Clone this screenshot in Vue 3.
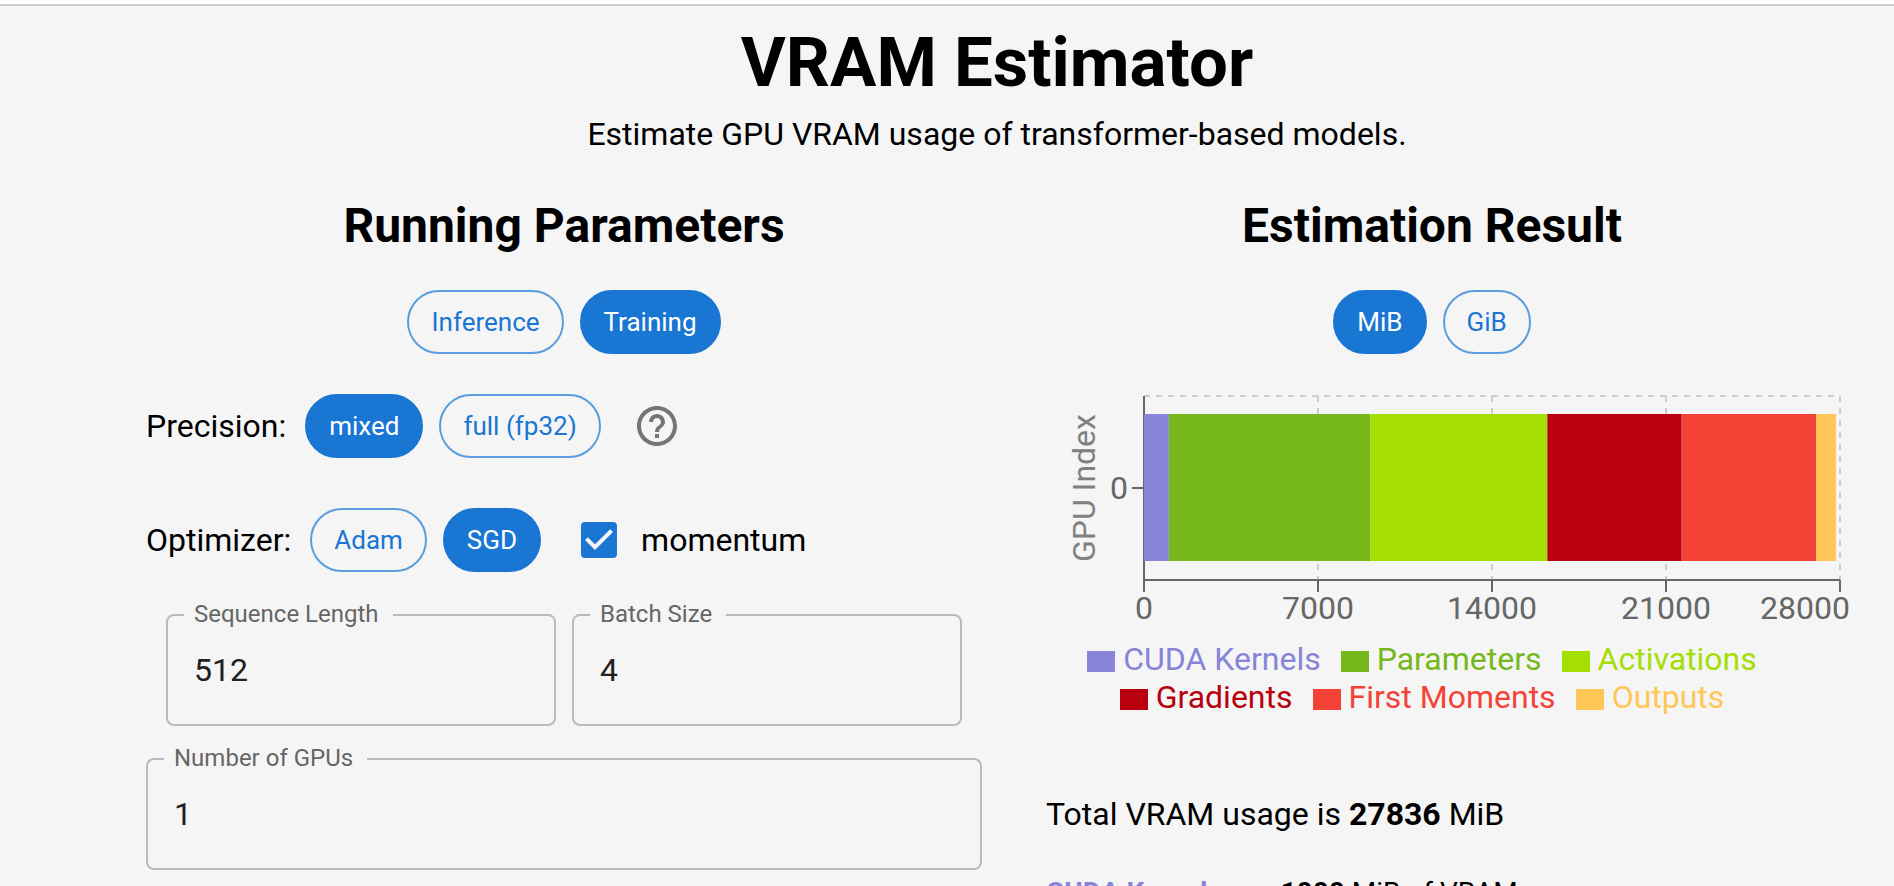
<script setup>
import { computed, ref } from 'vue'

const mode = ref('Training')
const precision = ref('mixed')
const optimizer = ref('SGD')
const unit = ref('MiB')
const momentum = ref(true)
const sequenceLength = ref(512)
const batchSize = ref(4)
const gpuCount = ref(1)

const usage = [
  { name: 'CUDA Kernels', value: 1000, color: '#8884d8' },
  { name: 'Parameters', value: 8107, color: '#76b81b' },
  { name: 'Activations', value: 7120, color: '#a4de02' },
  { name: 'Gradients', value: 5404, color: '#b9000e' },
  { name: 'First Moments', value: 5404, color: '#f44336' },
  { name: 'Outputs', value: 801, color: '#ffc658' },
]
const total = usage.reduce((sum, part) => sum + part.value, 0)

// Plot area inside the chart's own coordinate system
const plot = { left: 128, right: 824, top: 10, bottom: 194, max: 28000 }
const toX = (value) => plot.left + (value / plot.max) * (plot.right - plot.left)
const ticks = [0, 7000, 14000, 21000, 28000]

const bars = computed(() => {
  let start = 0
  return usage.map((part) => {
    const x = toX(start)
    start += part.value
    return { ...part, x, width: toX(start) - x }
  })
})
</script>

<template>
  <div class="top-strip"></div>
  <main class="page">
    <header class="intro">
      <h1>VRAM Estimator</h1>
      <p>Estimate GPU VRAM usage of transformer-based models.</p>
    </header>

    <div class="columns">
      <section class="params">
        <h2>Running Parameters</h2>
        <div class="chips centered">
          <button
            v-for="name in ['Inference', 'Training']"
            :key="name"
            type="button"
            class="chip"
            :class="{ filled: mode === name }"
            :aria-pressed="mode === name"
            @click="mode = name"
          >{{ name }}</button>
        </div>

        <div class="option precision">
          <span class="option-name">Precision:</span>
          <button
            v-for="name in ['mixed', 'full (fp32)']"
            :key="name"
            type="button"
            class="chip"
            :class="{ filled: precision === name }"
            :aria-pressed="precision === name"
            @click="precision = name"
          >{{ name }}</button>
          <button type="button" class="help" aria-label="About precision">
            <svg viewBox="0 0 24 24" aria-hidden="true">
              <path d="M11 18h2v-2h-2v2zm1-16C6.48 2 2 6.48 2 12s4.480 10 10 10 10-4.480 10-10S17.520 2 12 2zm0 18c-4.410 0-8-3.590-8-8s3.590-8 8-8 8 3.590 8 8-3.590 8-8 8zm0-14c-2.210 0-4 1.790-4 4h2c0-1.100.9-2 2-2s2 .9 2 2c0 2-3 1.750-3 5h2c0-2.250 3-2.500 3-5 0-2.210-1.790-4-4-4z" />
            </svg>
          </button>
        </div>

        <div class="option optimizer">
          <span class="option-name">Optimizer:</span>
          <button
            v-for="name in ['Adam', 'SGD']"
            :key="name"
            type="button"
            class="chip"
            :class="{ filled: optimizer === name }"
            :aria-pressed="optimizer === name"
            @click="optimizer = name"
          >{{ name }}</button>
          <label class="check">
            <span class="box">
              <input v-model="momentum" type="checkbox" />
              <svg v-if="momentum" viewBox="3 3 18 18" aria-hidden="true">
                <path d="M10 17l-5-5 1.410-1.410L10 14.170l7.590-7.590L19 8l-9 9z" />
              </svg>
            </span>
            <span>momentum</span>
          </label>
        </div>

        <div class="field-pair">
          <div class="field">
            <input id="sequence-length" v-model="sequenceLength" type="number" />
            <label for="sequence-length">Sequence Length</label>
          </div>
          <div class="field">
            <input id="batch-size" v-model="batchSize" type="number" />
            <label for="batch-size">Batch Size</label>
          </div>
        </div>
        <div class="field">
          <input id="gpu-count" v-model="gpuCount" type="number" />
          <label for="gpu-count">Number of GPUs</label>
        </div>
      </section>

      <section class="result">
        <h2>Estimation Result</h2>
        <div class="chips centered">
          <button
            v-for="name in ['MiB', 'GiB']"
            :key="name"
            type="button"
            class="chip"
            :class="{ filled: unit === name }"
            :aria-pressed="unit === name"
            @click="unit = name"
          >{{ name }}</button>
        </div>

        <svg class="chart" viewBox="0 0 832 244" role="img" aria-label="VRAM usage per GPU">
          <g class="grid">
            <line :x1="plot.left" :y1="plot.top" :x2="plot.right" :y2="plot.top" />
            <line
              v-for="tick in ticks"
              :key="tick"
              :x1="toX(tick)"
              :y1="plot.top"
              :x2="toX(tick)"
              :y2="plot.bottom"
            />
          </g>
          <g class="axis">
            <line :x1="plot.left" :y1="plot.top" :x2="plot.left" :y2="plot.bottom" />
            <line :x1="plot.left" :y1="plot.bottom" :x2="plot.right" :y2="plot.bottom" />
            <line :x1="plot.left - 12" y1="102" :x2="plot.left" y2="102" />
            <line
              v-for="tick in ticks"
              :key="tick"
              :x1="toX(tick)"
              :y1="plot.bottom"
              :x2="toX(tick)"
              :y2="plot.bottom + 12"
            />
          </g>
          <rect
            v-for="bar in bars"
            :key="bar.name"
            :x="bar.x"
            y="28"
            :width="bar.width"
            height="147"
            :fill="bar.color"
          />
          <g class="tick-label">
            <text
              v-for="tick in ticks"
              :key="tick"
              :x="tick === plot.max ? 834 : toX(tick)"
              y="233"
              :text-anchor="tick === plot.max ? 'end' : 'middle'"
            >{{ tick }}</text>
            <text x="112" y="113" text-anchor="end">0</text>
          </g>
          <text class="axis-title" transform="translate(79 102) rotate(-90)" text-anchor="middle">GPU Index</text>
        </svg>

        <ul class="legend">
          <li v-for="part in usage" :key="part.name" :style="{ color: part.color }">
            <i class="swatch"></i>{{ part.name }}
          </li>
        </ul>

        <div class="summary">
          <p>Total VRAM usage is <b>{{ total }}</b> {{ unit }}</p>
          <p class="detail">
            <b :style="{ color: usage[0].color }">{{ usage[0].name }}</b> use
            <b>{{ usage[0].value }}</b> {{ unit }} of VRAM
          </p>
        </div>
      </section>
    </div>
  </main>
</template>

<style>
body {
  background: #f5f5f5;
}
</style>

<style scoped>
.top-strip {
  height: 4px;
  background: #fff;
  border-bottom: 2px solid #ccc;
}

.page {
  padding: 17px 46px 0 146px;
  font-family: Roboto, "Liberation Sans", sans-serif;
  font-size: 32px;
  line-height: 40px;
  color: #000;
}

.page * {
  box-sizing: border-box;
}

h1,
h2,
p {
  margin: 0;
}

.intro {
  text-align: center;
  margin-bottom: 40px;
}

h1 {
  font-size: 69px;
  line-height: 80px;
  margin-bottom: 7px;
}

.intro p {
  line-height: 48px;
}

h2 {
  font-size: 48px;
  line-height: 56px;
  margin-bottom: 36px;
  text-align: center;
}

.columns {
  display: grid;
  grid-template-columns: minmax(0, 836fr) minmax(0, 832fr);
  column-gap: 34px;
}

.chips,
.option {
  display: flex;
  align-items: center;
  gap: 16px;
}

.option-name {
  padding-right: 3px;
}

.centered {
  justify-content: center;
}

.chip {
  height: 64px;
  padding: 0 22px;
  border: 2px solid rgba(25, 118, 210, 0.7);
  border-radius: 32px;
  background: transparent;
  color: #1976d2;
  font-family: inherit;
  font-size: 26px;
  cursor: pointer;
}

.chip.filled {
  border-color: #1976d2;
  background: #1976d2;
  color: #fff;
}

.precision {
  margin-top: 40px;
}

.optimizer {
  margin-top: 50px;
}

.help {
  width: 48px;
  height: 48px;
  margin-left: 16px;
  padding: 0;
  border: 0;
  background: transparent;
  cursor: pointer;
}

.help svg {
  display: block;
  fill: #757575;
}

.check {
  display: flex;
  align-items: center;
  gap: 24px;
  margin-left: 24px;
}

.box {
  position: relative;
  width: 36px;
  height: 36px;
}

.box input {
  display: block;
  appearance: none;
  width: 36px;
  height: 36px;
  margin: 0;
  border: 4px solid #666;
  border-radius: 4px;
}

.box input:checked {
  border-color: #1976d2;
  background: #1976d2;
}

.box svg {
  position: absolute;
  inset: 0;
  fill: #f5f5f5;
  pointer-events: none;
}

.field-pair {
  display: grid;
  grid-template-columns: 1fr 1fr;
  gap: 16px;
  margin: 42px 20px 32px;
}

.field {
  position: relative;
}

.field input {
  display: block;
  width: 100%;
  height: 112px;
  padding: 0 26px;
  border: 2px solid #bababa;
  border-radius: 8px;
  background: transparent;
  color: #212121;
  font-family: inherit;
  font-size: 32px;
  appearance: textfield;
}

.field input::-webkit-inner-spin-button {
  display: none;
}

.field label {
  position: absolute;
  top: -14px;
  left: 18px;
  padding: 0 14px 0 10px;
  background: #f5f5f5;
  color: #666;
  font-size: 24px;
  line-height: 28px;
}

.chart {
  display: block;
  width: 100%;
  margin-top: 32px;
  overflow: visible;
  font-size: 32px;
}

.grid line {
  stroke: #ccc;
  stroke-width: 2;
  stroke-dasharray: 6 6;
}

.axis line {
  stroke: #666;
  stroke-width: 2;
}

.tick-label {
  fill: #666;
}

.axis-title {
  fill: #808080;
}

.legend {
  display: flex;
  flex-wrap: wrap;
  justify-content: center;
  margin: 10px 0 78px;
  padding: 0;
  list-style: none;
  line-height: 38px;
}

.legend li {
  display: flex;
  align-items: center;
  margin-right: 20px;
}

.swatch {
  width: 28px;
  height: 21px;
  margin: 4px 8px 0 0;
  background: currentColor;
}

.summary {
  display: grid;
  gap: 39px;
  padding-left: 30px;
}

.detail {
  font-size: 28px;
}
</style>
